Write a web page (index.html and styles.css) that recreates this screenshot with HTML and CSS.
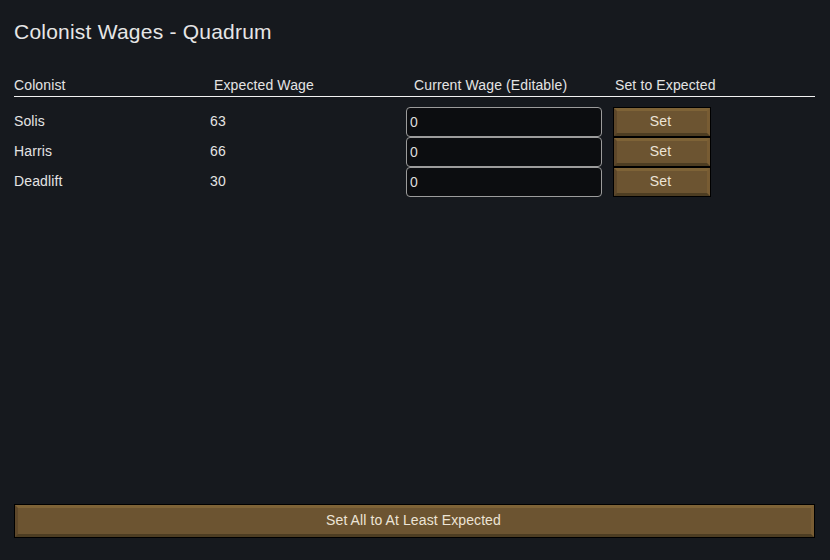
FILE: index.html
```html
<!DOCTYPE html>
<html lang="en">
<head>
<meta charset="utf-8">
<title>Colonist Wages - Quadrum</title>
<link rel="stylesheet" href="styles.css">
</head>
<body>
<div class="window">
  <h1 class="title">Colonist Wages - Quadrum</h1>
  <div class="table">
    <div class="head">
      <div class="hcell">Colonist</div>
      <div class="hcell">Expected Wage</div>
      <div class="hcell">Current Wage (Editable)</div>
      <div class="hcell">Set to Expected</div>
    </div>
    <div class="rows">
      <div class="row">
        <div class="cell">Solis</div>
        <div class="cell">63</div>
        <div class="cell"><input class="wage" type="text" value="0"></div>
        <div class="cell"><button class="btn set">Set</button></div>
      </div>
      <div class="row">
        <div class="cell">Harris</div>
        <div class="cell">66</div>
        <div class="cell"><input class="wage" type="text" value="0"></div>
        <div class="cell"><button class="btn set">Set</button></div>
      </div>
      <div class="row">
        <div class="cell">Deadlift</div>
        <div class="cell">30</div>
        <div class="cell"><input class="wage" type="text" value="0"></div>
        <div class="cell"><button class="btn set">Set</button></div>
      </div>
    </div>
  </div>
  <div class="spacer"></div>
  <button class="btn all">Set All to At Least Expected</button>
</div>
</body>
</html>
```
FILE: styles.css
```css
html, body {
  margin: 0;
  padding: 0;
  background: #16191e;
}
body {
  font-family: "Liberation Sans", Arial, sans-serif;
  color: #e4e4e4;
  font-size: 14px;
  letter-spacing: 0.12px;
}
.window {
  box-sizing: border-box;
  width: 830px;
  height: 560px;
  padding: 20px 15px 23px 14px;
  display: flex;
  flex-direction: column;
}
.title {
  margin: 0;
  font-size: 21px;
  font-weight: normal;
  line-height: 24px;
  letter-spacing: 0.22px;
  color: #e6e6e6;
}
.table {
  margin-top: 31px;
}
.head {
  display: grid;
  grid-template-columns: 200px 200px 201px 1fr;
  line-height: 20px;
  border-bottom: 1px solid #f2f2f2;
  padding-bottom: 1px;
}
.hcell {
  white-space: nowrap;
}
.rows {
  margin-top: 10px;
}
.row {
  display: grid;
  grid-template-columns: 196px 196px 207px 98px;
  height: 30px;
}
.cell {
  display: flex;
  align-items: center;
  padding-bottom: 2px;
  box-sizing: border-box;
  height: 30px;
}
.cell:nth-child(3),
.cell:nth-child(4) {
  padding-bottom: 0;
}
.wage {
  box-sizing: border-box;
  width: 196px;
  height: 30px;
  margin: 0;
  padding: 0 0 0 3px;
  border: 1px solid #9c9c9c;
  border-radius: 4px;
  background: #0c0d10;
  color: #dcdcdc;
  font-family: "Liberation Sans", Arial, sans-serif;
  font-size: 14px;
  outline: none;
}
.btn {
  box-sizing: border-box;
  margin: 0;
  padding: 0;
  background: #6c5431;
  color: #ece4d6;
  font-family: "Liberation Sans", Arial, sans-serif;
  font-size: 14px;
  letter-spacing: 0.1px;
  border-style: solid;
  border-width: 3px 3px 3px 3px;
  border-color: #7e6337 #785c33 #4d3d22 #5d472a;
  box-shadow: 0 0 0 1px #000;
  cursor: pointer;
}
.set {
  width: 96px;
  height: 28px;
  margin-left: 1px;
  padding-bottom: 3px;
  padding-right: 3px;
}
.spacer {
  flex: 1;
}
.all {
  width: 799px;
  height: 32px;
  margin-left: 1px;
  padding-bottom: 3px;
  padding-right: 2px;
}
```
